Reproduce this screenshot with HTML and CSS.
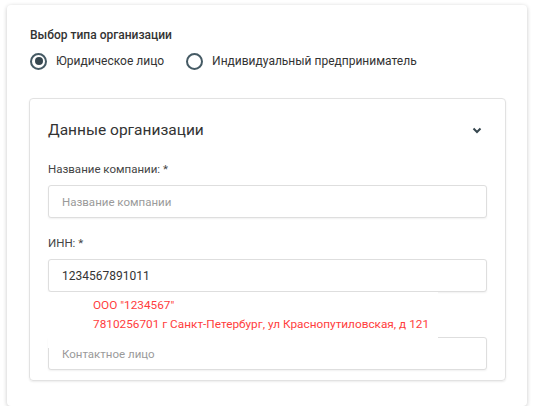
FILE: index.html
```html
<!DOCTYPE html>
<html lang="ru">
<head>
  <meta charset="UTF-8">
  <meta name="viewport" content="width=device-width, initial-scale=1.0">
  <title>Организация</title>
  <link rel="stylesheet" href="styles.css">
</head>
<body>
  <div class="card">
    <div class="group-title">Выбор типа организации</div>
    <div class="radios">
      <label class="radio checked"><span class="dot"></span>Юридическое лицо</label>
      <label class="radio"><span class="dot"></span>Индивидуальный предприниматель</label>
    </div>

    <section class="panel">
      <div class="panel-head">
        <h3>Данные организации</h3>
        <svg class="chevron" width="10" height="7" viewBox="0 0 10 7">
          <path d="M1.5 1.5 L5 5 L8.5 1.5" fill="none" stroke="#37474f" stroke-width="2"/>
        </svg>
      </div>

      <div class="field">
        <div class="label">Название компании: *</div>
        <input type="text" placeholder="Название компании">
      </div>

      <div class="field inn">
        <div class="label">ИНН: *</div>
        <input type="text" value="1234567891011">
        <div class="suggest">
          <div>ООО "1234567"</div>
          <div>7810256701 г Санкт-Петербург, ул Краснопутиловская, д 121</div>
        </div>
      </div>

      <div class="field contact">
        <input type="text" placeholder="Контактное лицо">
      </div>
    </section>
  </div>
</body>
</html>
```

FILE: styles.css
```css
body {
  font-family: Roboto, "Liberation Sans", Arial, sans-serif;
  margin: 0;
  padding: 5px 0 0 7px;
  background: #fff;
  color: #333;
}
.card {
  width: 520px;
  box-sizing: border-box;
  padding: 22px 21px 25px 22px;
  background: #fff;
  border-radius: 4px;
  box-shadow: 0 1px 4px rgba(0, 0, 0, 0.22);
}
.group-title {
  font-size: 12px;
  font-weight: 500;
  line-height: 16px;
  color: #333;
  padding-left: 1px;
}
.radios {
  display: flex;
  gap: 21px;
  margin-top: 9px;
  margin-bottom: 28px;
}
.radio {
  display: flex;
  align-items: center;
  gap: 9px;
  font-size: 12px;
  color: #333;
  line-height: 18px;
  padding-left: 1px;
}
.radio .dot {
  width: 13px;
  height: 13px;
  border: 2px solid #455a64;
  border-radius: 50%;
  position: relative;
}
.radio.checked .dot::after {
  content: "";
  position: absolute;
  top: 2.5px;
  left: 2.5px;
  width: 8px;
  height: 8px;
  border-radius: 50%;
  background: #37474f;
}
.panel {
  border: 1px solid #e2e2e2;
  border-radius: 4px;
  box-shadow: 0 1px 2px rgba(0, 0, 0, 0.08);
  padding: 20px 18px 10px 18px;
}
.panel-head {
  display: flex;
  justify-content: space-between;
  align-items: center;
  padding-right: 5px;
}
.panel-head h3 {
  margin: 0;
  font-size: 15.5px;
  font-weight: 400;
  line-height: 22px;
  color: #333;
}
.field {
  margin-top: 20px;
  position: relative;
}
.field + .field {
  margin-top: 17px;
}
.field.contact {
  margin-top: 45px;
}
.label {
  font-size: 11.5px;
  line-height: 16px;
  color: #444;
  margin-bottom: 8px;
}
.field input {
  display: block;
  width: 100%;
  box-sizing: border-box;
  height: 33px;
  border: 1px solid #dedede;
  border-radius: 3px;
  box-shadow: 0 1px 2px rgba(0, 0, 0, 0.06);
  padding: 0 13px;
  font-family: inherit;
  font-size: 12px;
  color: #333;
  outline: none;
}
.field input::placeholder {
  color: #9a9a9a;
  font-size: 11.5px;
}
.suggest {
  position: absolute;
  top: 100%;
  left: 0;
  width: 390px;
  height: 56px;
  box-sizing: border-box;
  padding: 4px 0 0 45px;
  background: #fff;
  z-index: 2;
  font-size: 11.8px;
  line-height: 19px;
  color: #ff3d3d;
}
```
